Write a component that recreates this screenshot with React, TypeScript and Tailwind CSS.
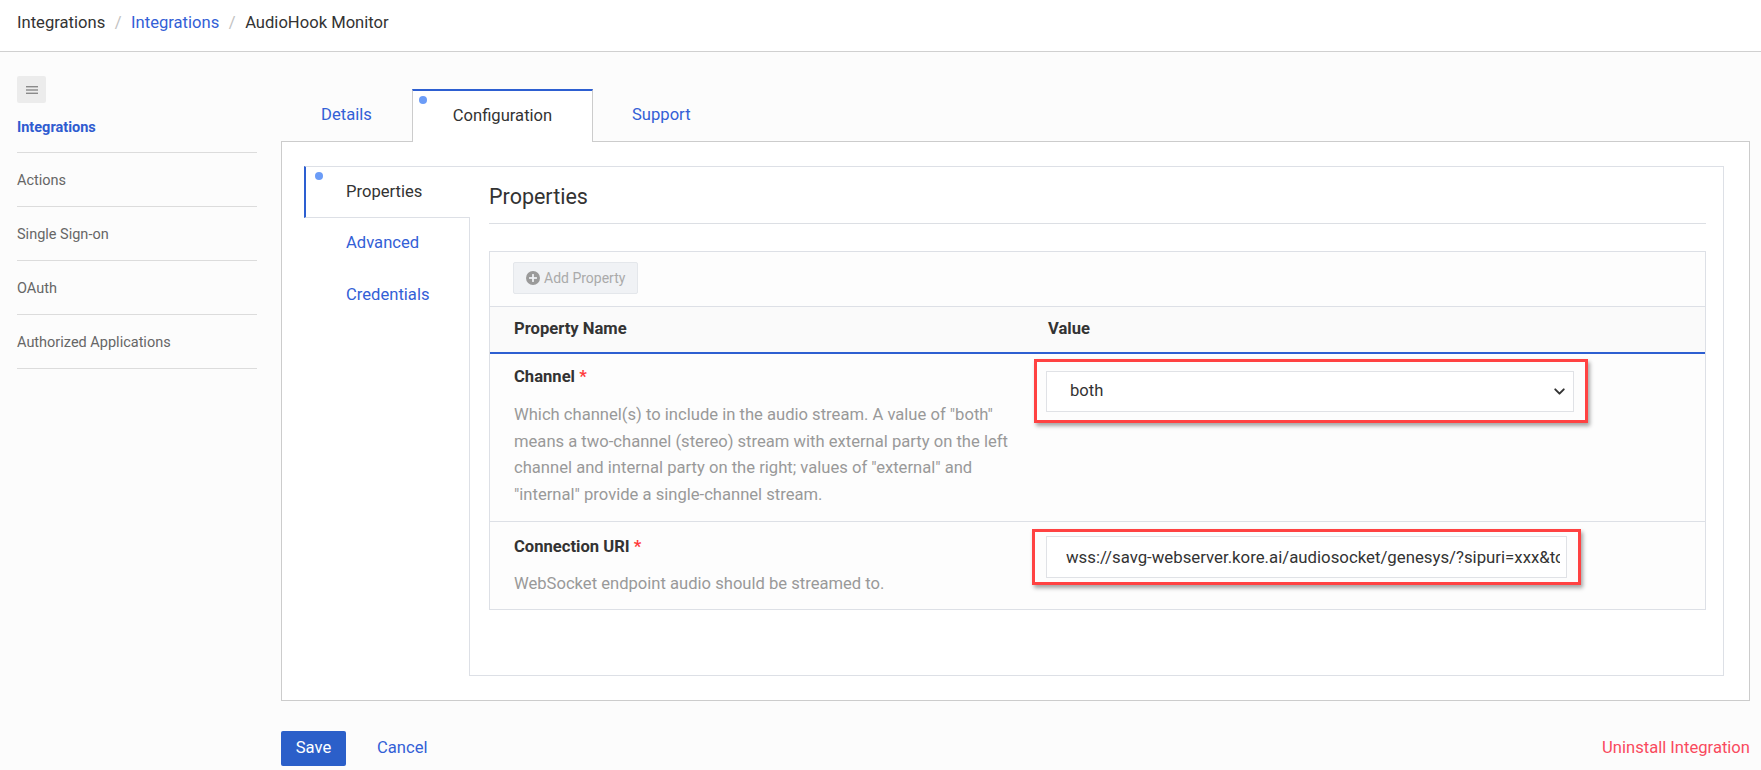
import { ChevronDown } from 'lucide-react'

const sideItems = ['Actions', 'Single Sign-on', 'OAuth', 'Authorized Applications']

function PlusCircle() {
  return (
    <svg width="14" height="14" viewBox="0 0 16 16" className="shrink-0">
      <circle cx="8" cy="8" r="8" fill="#9a9a9a" />
      <rect x="7" y="3.5" width="2" height="9" fill="#f0f2f5" />
      <rect x="3.5" y="7" width="9" height="2" fill="#f0f2f5" />
    </svg>
  )
}

function Sidebar() {
  return (
    <aside className="w-[240px] shrink-0">
      <div className="mt-[24px] w-[29px] h-[27px] rounded-[2px] bg-[#ececec] flex items-center justify-center">
        <svg width="12" height="10" viewBox="0 0 12 10">
          <rect y="1" width="12" height="1.4" fill="#8a8a8a" />
          <rect y="4.3" width="12" height="1.4" fill="#8a8a8a" />
          <rect y="7.6" width="12" height="1.4" fill="#8a8a8a" />
        </svg>
      </div>
      <div className="h-[50px] pt-[1px] flex items-center border-b border-[#dcdcdc] text-[14.5px] font-bold text-[#2f5bd0]">
        Integrations
      </div>
      {sideItems.map((item) => (
        <div
          key={item}
          className="h-[54px] pt-[2px] flex items-center border-b border-[#dcdcdc] text-[14.5px] text-[#666]"
        >
          {item}
        </div>
      ))}
    </aside>
  )
}

function TopTabs() {
  return (
    <div className="flex items-end h-[52px] mt-[37px]">
      <div className="w-[131px] h-[52px] flex items-center justify-center text-[16.6px] text-[#3360d6]">
        Details
      </div>
      <div className="relative w-[181px] h-[53px] -mb-[1px] z-10 bg-white border-t-2 border-t-[#2d5fd1] border-x border-x-[#cccccc] flex items-center justify-center pb-[1px] text-[16.6px] text-[#333]">
        <span className="absolute left-[6px] top-[5px] w-[8px] h-[8px] rounded-full bg-[#6b9cf7]" />
        Configuration
      </div>
      <div className="px-[39px] h-[52px] flex items-center text-[16.6px] text-[#3360d6]">
        Support
      </div>
    </div>
  )
}

function ChannelRow() {
  return (
    <div className="flex border-b border-[#dde0e6] bg-[#fdfdfd]">
      <div className="w-[534px] shrink-0 pl-[24px] pr-[10px] pt-[12px] pb-[13px]">
        <div className="text-[16.6px] leading-[22px] font-bold text-[#333]">
          Channel <span className="text-[#ff3b3b]">*</span>
        </div>
        <p className="mt-[14px] text-[16.6px] leading-[26.6px] text-[#999] max-w-[503px]">
          Which channel(s) to include in the audio stream. A value of "both" means a two-channel (stereo) stream with
          external party on the left channel and internal party on the right; values of "external" and "internal"
          provide a single-channel stream.
        </p>
      </div>
      <div className="flex-1 pl-[22px] pt-[17px]">
        <div className="relative w-[528px]">
          <span className="absolute -left-[12px] -right-[14px] -top-[12px] -bottom-[11px] border-[3px] border-[#ff4242] shadow-[2px_3px_4px_rgba(0,0,0,0.35)] pointer-events-none" />
          <div className="h-[41px] bg-white border border-[#e0e2e6] flex items-center justify-between pl-[23px] pr-[5px] text-[16.6px] text-[#333]">
            <span>both</span>
            <ChevronDown size={17} strokeWidth={2.75} className="text-[#333]" />
          </div>
        </div>
      </div>
    </div>
  )
}

function UriRow() {
  return (
    <div className="flex bg-[#fdfdfd]">
      <div className="w-[534px] shrink-0 pl-[24px] pr-[20px] pt-[14px] pb-[11px]">
        <div className="text-[16.6px] leading-[22px] font-bold text-[#333]">
          Connection URI <span className="text-[#ff3b3b]">*</span>
        </div>
        <p className="mt-[13px] text-[16.6px] leading-[26.6px] text-[#999]">WebSocket endpoint audio should be streamed to.</p>
      </div>
      <div className="flex-1 pl-[22px] pt-[14px]">
        <div className="relative w-[521px]">
          <span className="absolute -left-[14px] -right-[14px] -top-[7px] -bottom-[7px] border-[3px] border-[#ff4242] shadow-[2px_3px_4px_rgba(0,0,0,0.35)] pointer-events-none" />
          <input
            readOnly
            value="wss://savg-webserver.kore.ai/audiosocket/genesys/?sipuri=xxx&token=xxx"
            className="block w-full h-[42px] bg-white border border-[#e0e2e6] pl-[19px] pr-[6px] text-[16.8px] text-[#333] outline-none [font-family:Roboto,'Liberation_Sans',sans-serif]"
          />
        </div>
      </div>
    </div>
  )
}

function PropertiesPane() {
  return (
    <div className="flex-1 border border-[#dde0e6] bg-white pl-[19px] pr-[17px] h-[510px]">
      <h2 className="pt-[16px] pb-[12px] text-[21.5px] leading-[28px] text-[#333] border-b border-[#dcdfe4]">Properties</h2>
      <div className="mt-[27px] border border-[#dde0e6]">
        <div className="pl-[23px] pt-[10px] pb-[12px] bg-[#fdfdfd]">
          <button className="h-[32px] px-[12px] flex items-center gap-[4px] bg-[#f0f2f5] border border-[#e4e7eb] rounded-[2px] text-[14px] text-[#aaa]">
            <PlusCircle />
            Add Property
          </button>
        </div>
        <div className="flex h-[48px] items-center bg-[#fafafa] border-t border-[#dde0e6] border-b-2 border-b-[#2d5fd1] text-[16.6px] font-bold text-[#333]">
          <div className="w-[534px] pl-[24px]">Property Name</div>
          <div className="pl-[24px]">Value</div>
        </div>
        <ChannelRow />
        <UriRow />
      </div>
    </div>
  )
}

function SideTabs() {
  return (
    <div className="w-[165px] shrink-0 flex flex-col">
      <div className="relative z-10 -mr-[1px] h-[52px] bg-white border-t border-b border-[#dde0e6] border-l-2 border-l-[#2d5fd1] pl-[40px] flex items-center text-[16.6px] text-[#333]">
        <span className="absolute left-[9px] top-[5px] w-[8px] h-[8px] rounded-full bg-[#6b9cf7]" />
        Properties
      </div>
      <div className="h-[51px] pl-[42px] flex items-center text-[16.6px] text-[#3360d6]">Advanced</div>
      <div className="h-[52px] pl-[42px] flex items-center text-[16.6px] text-[#3360d6]">Credentials</div>
    </div>
  )
}

export default function App() {
  return (
    <div className="w-[1761px] h-[770px] overflow-hidden bg-[#fcfcfc] [font-family:Roboto,'Liberation_Sans',sans-serif]">
      <header className="h-[52px] bg-white border-b border-[#d0d0d0] pl-[17px] pt-[11px] text-[16.6px] leading-[23px]">
        <span className="text-[#333]">Integrations</span>
        <span className="mx-[9.5px] text-[#c2c2c2]">/</span>
        <span className="text-[#3360d6]">Integrations</span>
        <span className="mx-[9.5px] text-[#c2c2c2]">/</span>
        <span className="text-[#333]">AudioHook Monitor</span>
      </header>
      <div className="flex pl-[17px] pr-[11px]">
        <Sidebar />
        <main className="flex-1 ml-[24px]">
          <TopTabs />
          <section className="border border-[#cccccc] bg-white pt-[24px] pl-[22px] pr-[25px] pb-[24px]">
            <div className="flex">
              <SideTabs />
              <PropertiesPane />
            </div>
          </section>
          <div className="mt-[30px] flex items-center">
            <button className="w-[65px] h-[35px] rounded-[2px] bg-[#2b5fc9] text-white text-[16.6px]">Save</button>
            <span className="ml-[31px] text-[16.6px] text-[#3360d6]">Cancel</span>
            <span className="ml-auto text-[16.6px] text-[#f94a5e]">Uninstall Integration</span>
          </div>
        </main>
      </div>
    </div>
  )
}
